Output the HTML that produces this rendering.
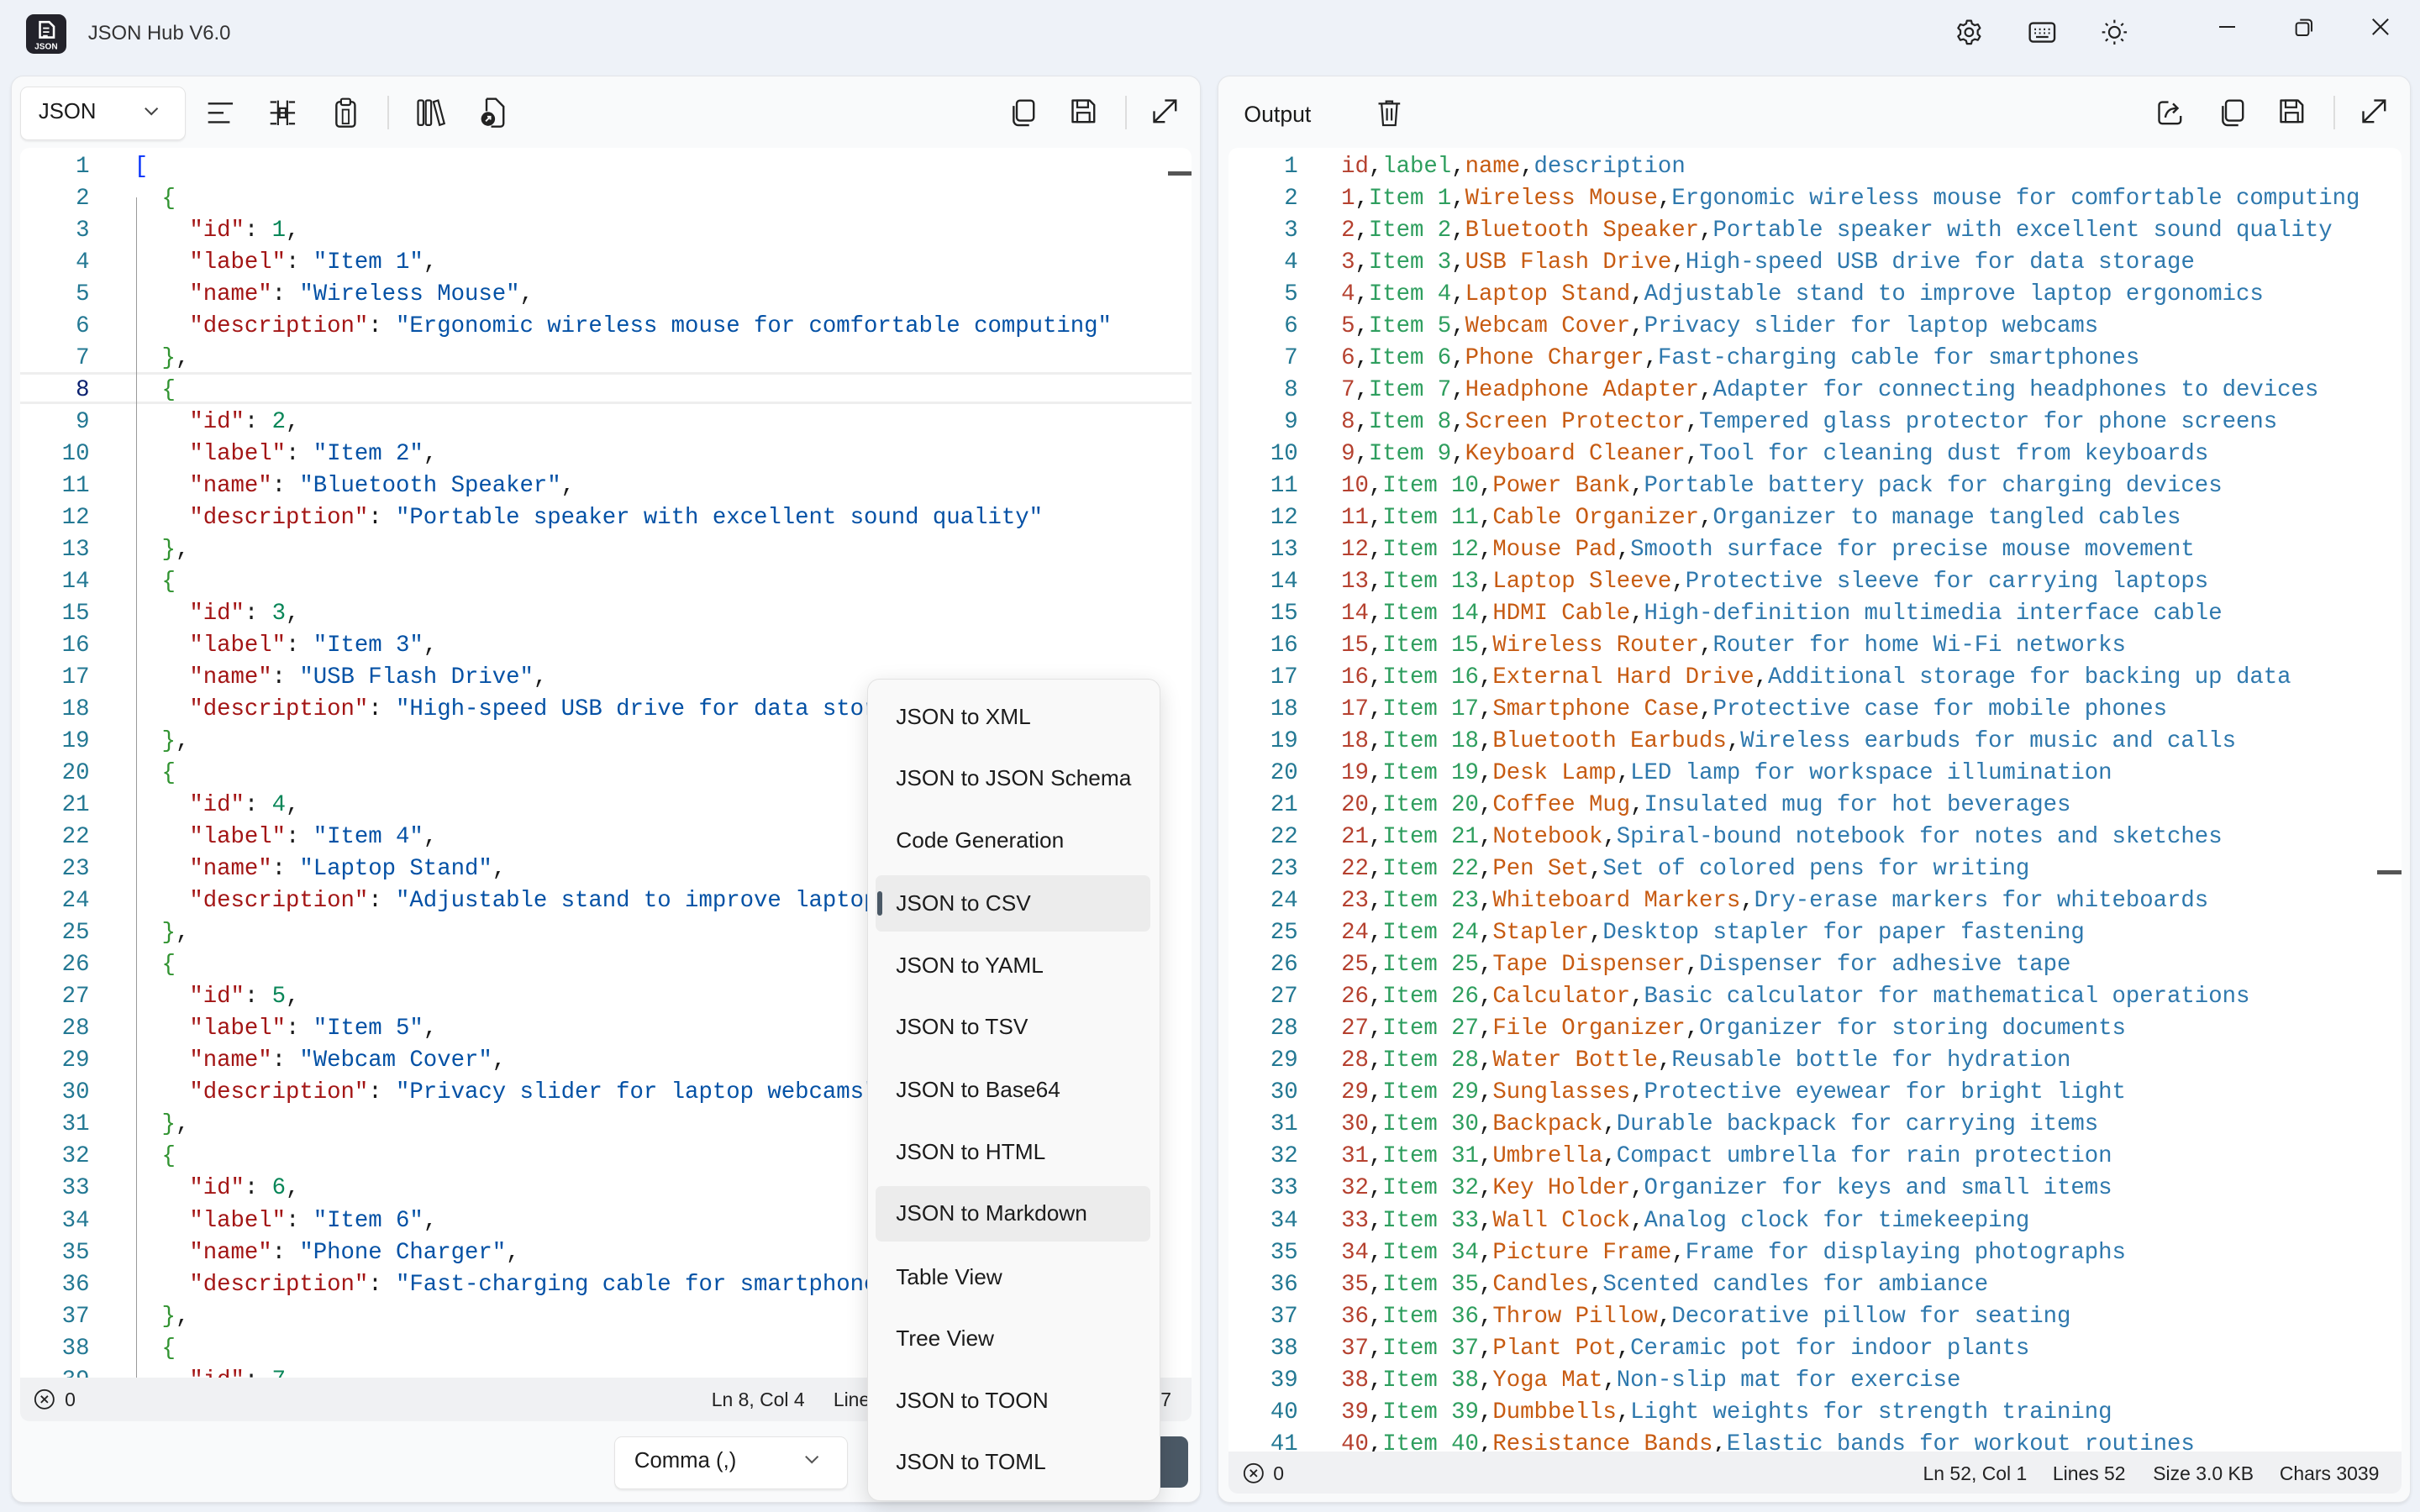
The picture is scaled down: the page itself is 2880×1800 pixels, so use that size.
<!DOCTYPE html>
<html><head><meta charset="utf-8"><style>
html,body{margin:0;padding:0;}
body{width:1568px;height:980px;zoom:1.836735;background:#eef2f8;font-family:"Liberation Sans",sans-serif;position:relative;overflow:hidden;color:#1b1b1b}
.abs{position:absolute}
.panel{position:absolute;background:#f9fafb;border:1px solid #e3e5e9;border-radius:8px;box-shadow:0 1px 2px rgba(0,0,0,.08)}
.ed{position:absolute;background:#fff;overflow:hidden;border-top-left-radius:6px;border-top-right-radius:6px}
.code{position:absolute;font-family:"Liberation Mono",monospace;font-size:14.9px;line-height:20.7px;white-space:pre;letter-spacing:-0.02px}
.gut{position:absolute;text-align:right;color:#237893;font-family:"Liberation Mono",monospace;font-size:14.9px;line-height:20.7px;white-space:pre}
.k{color:#a31515}.s{color:#0451a5}.n{color:#098658}.b1{color:#0431fa}.b2{color:#319331}
i{font-style:normal}
.r{color:#b5412f}.g{color:#2e9e5e}.o{color:#c75b12}.b{color:#2e78ad}
.status{position:absolute;background:#f0f1f3;font-size:12.5px;color:#222}
.menu{position:absolute;left:562px;top:440px;width:189px;height:532px;background:#f9f9f9;border:1px solid #e2e2e2;border-radius:8px;box-shadow:0 4px 14px rgba(0,0,0,.14)}
.mi{position:absolute;left:18px;font-size:14.3px;color:#1b1b1b;line-height:20px}
svg{position:absolute}
</style></head><body>

<!-- title bar -->
<div class="abs" style="left:17px;top:9px;width:26px;height:26px;background:#23232b;border-radius:5px"></div>
<svg style="left:17px;top:9px" width="26" height="26" viewBox="0 0 26 26"><path d="M9 5h6l3 3v7H9z" fill="none" stroke="#fff" stroke-width="1.4"/><path d="M11 9h4M11 11.5h4M11 14h3" stroke="#fff" stroke-width="1"/><text x="13" y="22.5" font-size="5.5" fill="#fff" text-anchor="middle" font-family="Liberation Sans" font-weight="bold">JSON</text></svg>
<div class="abs" style="left:57px;top:14px;font-size:13px;color:#333">JSON Hub V6.0</div>
<svg style="left:1266px;top:11px" width="20" height="20" viewBox="0 0 20 20"><circle cx="10" cy="10" r="2.6" fill="none" stroke="#222" stroke-width="1.2"/><path d="M8.6 2.5h2.8l.5 2 1.8 1 2-.6 1.4 2.4-1.5 1.5v2.4l1.5 1.5-1.4 2.4-2-.6-1.8 1-.5 2H8.6l-.5-2-1.8-1-2 .6-1.4-2.4 1.5-1.5V8.8L2.9 7.3l1.4-2.4 2 .6 1.8-1z" fill="none" stroke="#222" stroke-width="1.2" stroke-linejoin="round"/></svg>
<svg style="left:1313px;top:12px" width="20" height="18" viewBox="0 0 20 18"><rect x="2" y="3" width="16" height="12" rx="2" fill="none" stroke="#222" stroke-width="1.3"/><path d="M5 7h1M8 7h1M11 7h1M14 7h1M5 9.5h1M8 9.5h1M11 9.5h1M14 9.5h1M6 12h8" stroke="#222" stroke-width="1.2"/></svg>
<svg style="left:1360px;top:11px" width="20" height="20" viewBox="0 0 20 20"><circle cx="10" cy="10" r="3.5" fill="none" stroke="#222" stroke-width="1.2"/><path d="M10 2v2M10 16v2M2 10h2M16 10h2M4.3 4.3l1.4 1.4M14.3 14.3l1.4 1.4M4.3 15.7l1.4-1.4M14.3 5.7l1.4-1.4" stroke="#222" stroke-width="1.2"/></svg>
<div class="abs" style="left:1438px;top:17px;width:10px;height:1.2px;background:#222"></div>
<svg style="left:1486px;top:11px" width="14" height="14" viewBox="0 0 14 14"><rect x="2" y="4" width="8" height="8" rx="1.5" fill="none" stroke="#222" stroke-width="1.1"/><path d="M4.5 2h5.5a2 2 0 0 1 2 2v5.5" fill="none" stroke="#222" stroke-width="1.1"/></svg>
<svg style="left:1536px;top:11px" width="13" height="13" viewBox="0 0 13 13"><path d="M1.5 1.5l10 10M11.5 1.5l-10 10" stroke="#222" stroke-width="1.1"/></svg>

<!-- left panel -->
<div class="panel" style="left:7px;top:49px;width:770px;height:924px"></div>
<div class="abs" style="left:13px;top:56px;width:106px;height:34px;background:#fff;border:1px solid #e4e4e4;border-radius:5px;box-shadow:0 1px 1px rgba(0,0,0,.06)"></div>
<div class="abs" style="left:25px;top:65px;font-size:14px">JSON</div>
<svg style="left:93px;top:68px" width="10" height="8" viewBox="0 0 10 8"><path d="M1 2l4 4 4-4" fill="none" stroke="#444" stroke-width="1.1"/></svg>
<svg style="left:133px;top:63px" width="20" height="20" viewBox="0 0 20 20"><path d="M2 4h16M2 10h10M2 16h14" stroke="#222" stroke-width="1.3"/></svg>
<svg style="left:173px;top:63px" width="20" height="20" viewBox="0 0 20 20"><path d="M2 3h4M2 17h4M14 3h4M14 17h4M7 2v16M13 2v16M2 10h16" stroke="#222" stroke-width="1.2" fill="none"/><rect x="8" y="7" width="4" height="6" fill="none" stroke="#222" stroke-width="1.2"/></svg>
<svg style="left:214px;top:62px" width="20" height="22" viewBox="0 0 20 22"><rect x="4" y="4" width="12" height="16" rx="2" fill="none" stroke="#222" stroke-width="1.3"/><rect x="7" y="2" width="6" height="4" rx="1" fill="#fff" stroke="#222" stroke-width="1.2"/><rect x="8" y="9" width="4" height="9" fill="none" stroke="#222" stroke-width="1"/></svg>
<div class="abs" style="left:251px;top:62px;width:1px;height:22px;background:#ddd"></div>
<svg style="left:268px;top:62px" width="22" height="22" viewBox="0 0 22 22"><rect x="3" y="3" width="3.5" height="16" rx="1" fill="none" stroke="#222" stroke-width="1.2"/><rect x="8" y="3" width="3.5" height="16" rx="1" fill="none" stroke="#222" stroke-width="1.2"/><path d="M13 4l3-1 4 15-3 1z" fill="none" stroke="#222" stroke-width="1.2"/></svg>
<svg style="left:309px;top:62px" width="20" height="22" viewBox="0 0 20 22"><path d="M6 2h6l5 5v11a2 2 0 0 1-2 2H9" fill="none" stroke="#222" stroke-width="1.3"/><path d="M6 2v8" stroke="#222" stroke-width="1.3"/><circle cx="7" cy="15" r="4.5" fill="#222"/><path d="M5.5 16.5l3-3M6.5 13.5h2v2" stroke="#fff" stroke-width="1"/></svg>
<svg style="left:653px;top:63px" width="20" height="20" viewBox="0 0 20 20"><rect x="6" y="2" width="11" height="13" rx="2" fill="none" stroke="#222" stroke-width="1.3"/><path d="M4 5.5v9.5a3 3 0 0 0 3 3h7" fill="none" stroke="#222" stroke-width="1.3"/></svg>
<svg style="left:692px;top:62px" width="20" height="20" viewBox="0 0 20 20"><path d="M3 3h11l3 3v11H3z" fill="none" stroke="#222" stroke-width="1.3" stroke-linejoin="round"/><rect x="6" y="3" width="7" height="4.5" fill="none" stroke="#222" stroke-width="1.2"/><rect x="6" y="11" width="8" height="6" fill="none" stroke="#222" stroke-width="1.2"/></svg>
<div class="abs" style="left:729px;top:62px;width:1px;height:22px;background:#ddd"></div>
<svg style="left:745px;top:62px" width="20" height="20" viewBox="0 0 20 20"><path d="M3 17L17 3M10 3h7v7M3 10v7h7" fill="none" stroke="#222" stroke-width="1.3"/></svg>

<div class="ed" style="left:13px;top:96px;width:759px;height:797px">
  <div class="abs" style="left:0;top:145px;width:759px;border-top:2px solid #eeeeee;border-bottom:2px solid #eeeeee;box-sizing:border-box;height:21px"></div>
  <div class="abs" style="left:75px;top:32px;width:1px;height:780px;background:#9a9a9a"></div>
  <div class="abs" style="left:744px;top:15px;width:15px;height:3px;background:#555"></div>
  <div class="gut" style="left:0;top:2px;width:45px">1
2
3
4
5
6
7
<span style="color:#0b216f">8</span>
9
10
11
12
13
14
15
16
17
18
19
20
21
22
23
24
25
26
27
28
29
30
31
32
33
34
35
36
37
38
39</div>
  <div class="code" style="left:74px;top:2px"><span class="b1">[</span>
  <span class="b2">{</span>
    <span class="k">"id"</span>: <span class="n">1</span>,
    <span class="k">"label"</span>: <span class="s">"Item 1"</span>,
    <span class="k">"name"</span>: <span class="s">"Wireless Mouse"</span>,
    <span class="k">"description"</span>: <span class="s">"Ergonomic wireless mouse for comfortable computing"</span>
  <span class="b2">}</span>,
  <span class="b2">{</span>
    <span class="k">"id"</span>: <span class="n">2</span>,
    <span class="k">"label"</span>: <span class="s">"Item 2"</span>,
    <span class="k">"name"</span>: <span class="s">"Bluetooth Speaker"</span>,
    <span class="k">"description"</span>: <span class="s">"Portable speaker with excellent sound quality"</span>
  <span class="b2">}</span>,
  <span class="b2">{</span>
    <span class="k">"id"</span>: <span class="n">3</span>,
    <span class="k">"label"</span>: <span class="s">"Item 3"</span>,
    <span class="k">"name"</span>: <span class="s">"USB Flash Drive"</span>,
    <span class="k">"description"</span>: <span class="s">"High-speed USB drive for data storage"</span>
  <span class="b2">}</span>,
  <span class="b2">{</span>
    <span class="k">"id"</span>: <span class="n">4</span>,
    <span class="k">"label"</span>: <span class="s">"Item 4"</span>,
    <span class="k">"name"</span>: <span class="s">"Laptop Stand"</span>,
    <span class="k">"description"</span>: <span class="s">"Adjustable stand to improve laptop ergonomics"</span>
  <span class="b2">}</span>,
  <span class="b2">{</span>
    <span class="k">"id"</span>: <span class="n">5</span>,
    <span class="k">"label"</span>: <span class="s">"Item 5"</span>,
    <span class="k">"name"</span>: <span class="s">"Webcam Cover"</span>,
    <span class="k">"description"</span>: <span class="s">"Privacy slider for laptop webcams"</span>
  <span class="b2">}</span>,
  <span class="b2">{</span>
    <span class="k">"id"</span>: <span class="n">6</span>,
    <span class="k">"label"</span>: <span class="s">"Item 6"</span>,
    <span class="k">"name"</span>: <span class="s">"Phone Charger"</span>,
    <span class="k">"description"</span>: <span class="s">"Fast-charging cable for smartphones"</span>
  <span class="b2">}</span>,
  <span class="b2">{</span>
    <span class="k">"id"</span>: <span class="n">7</span>,</div>
</div>
<div class="status" style="left:13px;top:893px;width:759px;height:28px;border-bottom-left-radius:6px;border-bottom-right-radius:6px">
  <svg style="left:9px;top:7px" width="14" height="14" viewBox="0 0 14 14"><circle cx="7" cy="7" r="6" fill="none" stroke="#222" stroke-width="1"/><path d="M4.8 4.8l4.4 4.4M9.2 4.8l-4.4 4.4" stroke="#222" stroke-width="1"/></svg>
  <div class="abs" style="left:29px;top:7px">0</div>
  <div class="abs" style="left:448px;top:7px">Ln 8, Col 4</div>
  <div class="abs" style="left:527px;top:7px">Lines 52</div>
  <div class="abs" style="left:739px;top:7px">7</div>
</div>
<div class="abs" style="left:398px;top:931px;width:150px;height:33px;background:#fff;border:1px solid #e4e4e4;border-radius:5px;box-shadow:0 1px 1px rgba(0,0,0,.06)"></div>
<div class="abs" style="left:411px;top:939px;font-size:14px">Comma (,)</div>
<svg style="left:521px;top:942px" width="10" height="8" viewBox="0 0 10 8"><path d="M1 2l4 4 4-4" fill="none" stroke="#555" stroke-width="1.1"/></svg>
<div class="abs" style="left:740px;top:931px;width:30px;height:33px;background:#4b5966;border-radius:5px"></div>

<!-- right panel -->
<div class="panel" style="left:789px;top:49px;width:772px;height:924px"></div>
<div class="abs" style="left:806px;top:66px;font-size:14.5px">Output</div>
<svg style="left:890px;top:63px" width="20" height="20" viewBox="0 0 20 20"><path d="M3 4h14M8 4V2.5h4V4M5 4l1 14h8l1-14M8.5 7v8M11.5 7v8" fill="none" stroke="#222" stroke-width="1.2"/></svg>
<svg style="left:1396px;top:63px" width="20" height="20" viewBox="0 0 20 20"><path d="M9 3H5a2 2 0 0 0-2 2v10a2 2 0 0 0 2 2h10a2 2 0 0 0 2-2v-3" fill="none" stroke="#222" stroke-width="1.3"/><path d="M7 13c1-5 4-6 8-6M12 4l3 3-3 3" fill="none" stroke="#222" stroke-width="1.3"/></svg>
<svg style="left:1436px;top:63px" width="20" height="20" viewBox="0 0 20 20"><rect x="6" y="2" width="11" height="13" rx="2" fill="none" stroke="#222" stroke-width="1.3"/><path d="M4 5.5v9.5a3 3 0 0 0 3 3h7" fill="none" stroke="#222" stroke-width="1.3"/></svg>
<svg style="left:1475px;top:62px" width="20" height="20" viewBox="0 0 20 20"><path d="M3 3h11l3 3v11H3z" fill="none" stroke="#222" stroke-width="1.3" stroke-linejoin="round"/><rect x="6" y="3" width="7" height="4.5" fill="none" stroke="#222" stroke-width="1.2"/><rect x="6" y="11" width="8" height="6" fill="none" stroke="#222" stroke-width="1.2"/></svg>
<div class="abs" style="left:1512px;top:62px;width:1px;height:22px;background:#ddd"></div>
<svg style="left:1528px;top:62px" width="20" height="20" viewBox="0 0 20 20"><path d="M3 17L17 3M10 3h7v7M3 10v7h7" fill="none" stroke="#222" stroke-width="1.3"/></svg>

<div class="ed" style="left:796px;top:96px;width:760px;height:845px">
  <div class="abs" style="left:744px;top:468px;width:16px;height:3px;background:#555"></div>
  <div class="gut" style="left:0;top:2px;width:45px">1
2
3
4
5
6
7
8
9
10
11
12
13
14
15
16
17
18
19
20
21
22
23
24
25
26
27
28
29
30
31
32
33
34
35
36
37
38
39
40
41</div>
  <div class="code" style="left:73px;top:2px"><i class=r>id</i>,<i class=g>label</i>,<i class=o>name</i>,<i class=b>description</i>
<i class=r>1</i>,<i class=g>Item 1</i>,<i class=o>Wireless Mouse</i>,<i class=b>Ergonomic wireless mouse for comfortable computing</i>
<i class=r>2</i>,<i class=g>Item 2</i>,<i class=o>Bluetooth Speaker</i>,<i class=b>Portable speaker with excellent sound quality</i>
<i class=r>3</i>,<i class=g>Item 3</i>,<i class=o>USB Flash Drive</i>,<i class=b>High-speed USB drive for data storage</i>
<i class=r>4</i>,<i class=g>Item 4</i>,<i class=o>Laptop Stand</i>,<i class=b>Adjustable stand to improve laptop ergonomics</i>
<i class=r>5</i>,<i class=g>Item 5</i>,<i class=o>Webcam Cover</i>,<i class=b>Privacy slider for laptop webcams</i>
<i class=r>6</i>,<i class=g>Item 6</i>,<i class=o>Phone Charger</i>,<i class=b>Fast-charging cable for smartphones</i>
<i class=r>7</i>,<i class=g>Item 7</i>,<i class=o>Headphone Adapter</i>,<i class=b>Adapter for connecting headphones to devices</i>
<i class=r>8</i>,<i class=g>Item 8</i>,<i class=o>Screen Protector</i>,<i class=b>Tempered glass protector for phone screens</i>
<i class=r>9</i>,<i class=g>Item 9</i>,<i class=o>Keyboard Cleaner</i>,<i class=b>Tool for cleaning dust from keyboards</i>
<i class=r>10</i>,<i class=g>Item 10</i>,<i class=o>Power Bank</i>,<i class=b>Portable battery pack for charging devices</i>
<i class=r>11</i>,<i class=g>Item 11</i>,<i class=o>Cable Organizer</i>,<i class=b>Organizer to manage tangled cables</i>
<i class=r>12</i>,<i class=g>Item 12</i>,<i class=o>Mouse Pad</i>,<i class=b>Smooth surface for precise mouse movement</i>
<i class=r>13</i>,<i class=g>Item 13</i>,<i class=o>Laptop Sleeve</i>,<i class=b>Protective sleeve for carrying laptops</i>
<i class=r>14</i>,<i class=g>Item 14</i>,<i class=o>HDMI Cable</i>,<i class=b>High-definition multimedia interface cable</i>
<i class=r>15</i>,<i class=g>Item 15</i>,<i class=o>Wireless Router</i>,<i class=b>Router for home Wi-Fi networks</i>
<i class=r>16</i>,<i class=g>Item 16</i>,<i class=o>External Hard Drive</i>,<i class=b>Additional storage for backing up data</i>
<i class=r>17</i>,<i class=g>Item 17</i>,<i class=o>Smartphone Case</i>,<i class=b>Protective case for mobile phones</i>
<i class=r>18</i>,<i class=g>Item 18</i>,<i class=o>Bluetooth Earbuds</i>,<i class=b>Wireless earbuds for music and calls</i>
<i class=r>19</i>,<i class=g>Item 19</i>,<i class=o>Desk Lamp</i>,<i class=b>LED lamp for workspace illumination</i>
<i class=r>20</i>,<i class=g>Item 20</i>,<i class=o>Coffee Mug</i>,<i class=b>Insulated mug for hot beverages</i>
<i class=r>21</i>,<i class=g>Item 21</i>,<i class=o>Notebook</i>,<i class=b>Spiral-bound notebook for notes and sketches</i>
<i class=r>22</i>,<i class=g>Item 22</i>,<i class=o>Pen Set</i>,<i class=b>Set of colored pens for writing</i>
<i class=r>23</i>,<i class=g>Item 23</i>,<i class=o>Whiteboard Markers</i>,<i class=b>Dry-erase markers for whiteboards</i>
<i class=r>24</i>,<i class=g>Item 24</i>,<i class=o>Stapler</i>,<i class=b>Desktop stapler for paper fastening</i>
<i class=r>25</i>,<i class=g>Item 25</i>,<i class=o>Tape Dispenser</i>,<i class=b>Dispenser for adhesive tape</i>
<i class=r>26</i>,<i class=g>Item 26</i>,<i class=o>Calculator</i>,<i class=b>Basic calculator for mathematical operations</i>
<i class=r>27</i>,<i class=g>Item 27</i>,<i class=o>File Organizer</i>,<i class=b>Organizer for storing documents</i>
<i class=r>28</i>,<i class=g>Item 28</i>,<i class=o>Water Bottle</i>,<i class=b>Reusable bottle for hydration</i>
<i class=r>29</i>,<i class=g>Item 29</i>,<i class=o>Sunglasses</i>,<i class=b>Protective eyewear for bright light</i>
<i class=r>30</i>,<i class=g>Item 30</i>,<i class=o>Backpack</i>,<i class=b>Durable backpack for carrying items</i>
<i class=r>31</i>,<i class=g>Item 31</i>,<i class=o>Umbrella</i>,<i class=b>Compact umbrella for rain protection</i>
<i class=r>32</i>,<i class=g>Item 32</i>,<i class=o>Key Holder</i>,<i class=b>Organizer for keys and small items</i>
<i class=r>33</i>,<i class=g>Item 33</i>,<i class=o>Wall Clock</i>,<i class=b>Analog clock for timekeeping</i>
<i class=r>34</i>,<i class=g>Item 34</i>,<i class=o>Picture Frame</i>,<i class=b>Frame for displaying photographs</i>
<i class=r>35</i>,<i class=g>Item 35</i>,<i class=o>Candles</i>,<i class=b>Scented candles for ambiance</i>
<i class=r>36</i>,<i class=g>Item 36</i>,<i class=o>Throw Pillow</i>,<i class=b>Decorative pillow for seating</i>
<i class=r>37</i>,<i class=g>Item 37</i>,<i class=o>Plant Pot</i>,<i class=b>Ceramic pot for indoor plants</i>
<i class=r>38</i>,<i class=g>Item 38</i>,<i class=o>Yoga Mat</i>,<i class=b>Non-slip mat for exercise</i>
<i class=r>39</i>,<i class=g>Item 39</i>,<i class=o>Dumbbells</i>,<i class=b>Light weights for strength training</i>
<i class=r>40</i>,<i class=g>Item 40</i>,<i class=o>Resistance Bands</i>,<i class=b>Elastic bands for workout routines</i></div>
</div>
<div class="status" style="left:796px;top:941px;width:760px;height:27px;border-bottom-left-radius:6px;border-bottom-right-radius:6px">
  <svg style="left:9px;top:7px" width="14" height="14" viewBox="0 0 14 14"><circle cx="7" cy="7" r="6" fill="none" stroke="#222" stroke-width="1"/><path d="M4.8 4.8l4.4 4.4M9.2 4.8l-4.4 4.4" stroke="#222" stroke-width="1"/></svg>
  <div class="abs" style="left:29px;top:7px">0</div>
  <div class="abs" style="left:450px;top:7px">Ln 52, Col 1</div>
  <div class="abs" style="left:534px;top:7px">Lines 52</div>
  <div class="abs" style="left:599px;top:7px">Size 3.0 KB</div>
  <div class="abs" style="left:681px;top:7px">Chars 3039</div>
</div>

<!-- dropdown menu -->
<div class="menu">
  <div class="abs" style="left:5px;top:127px;width:178px;height:36px;background:#ececec;border-radius:4px"></div>
  <div class="abs" style="left:6px;top:137px;width:3px;height:16px;background:#4b5966;border-radius:2px"></div>
  <div class="abs" style="left:5px;top:328px;width:178px;height:36px;background:#ececec;border-radius:4px"></div>
  <div class="mi" style="top:14px">JSON to XML</div>
  <div class="mi" style="top:54px">JSON to JSON Schema</div>
  <div class="mi" style="top:94px">Code Generation</div>
  <div class="mi" style="top:135px">JSON to CSV</div>
  <div class="mi" style="top:175px">JSON to YAML</div>
  <div class="mi" style="top:215px">JSON to TSV</div>
  <div class="mi" style="top:256px">JSON to Base64</div>
  <div class="mi" style="top:296px">JSON to HTML</div>
  <div class="mi" style="top:336px">JSON to Markdown</div>
  <div class="mi" style="top:377px">Table View</div>
  <div class="mi" style="top:417px">Tree View</div>
  <div class="mi" style="top:457px">JSON to TOON</div>
  <div class="mi" style="top:497px">JSON to TOML</div>
</div>
</body></html>
